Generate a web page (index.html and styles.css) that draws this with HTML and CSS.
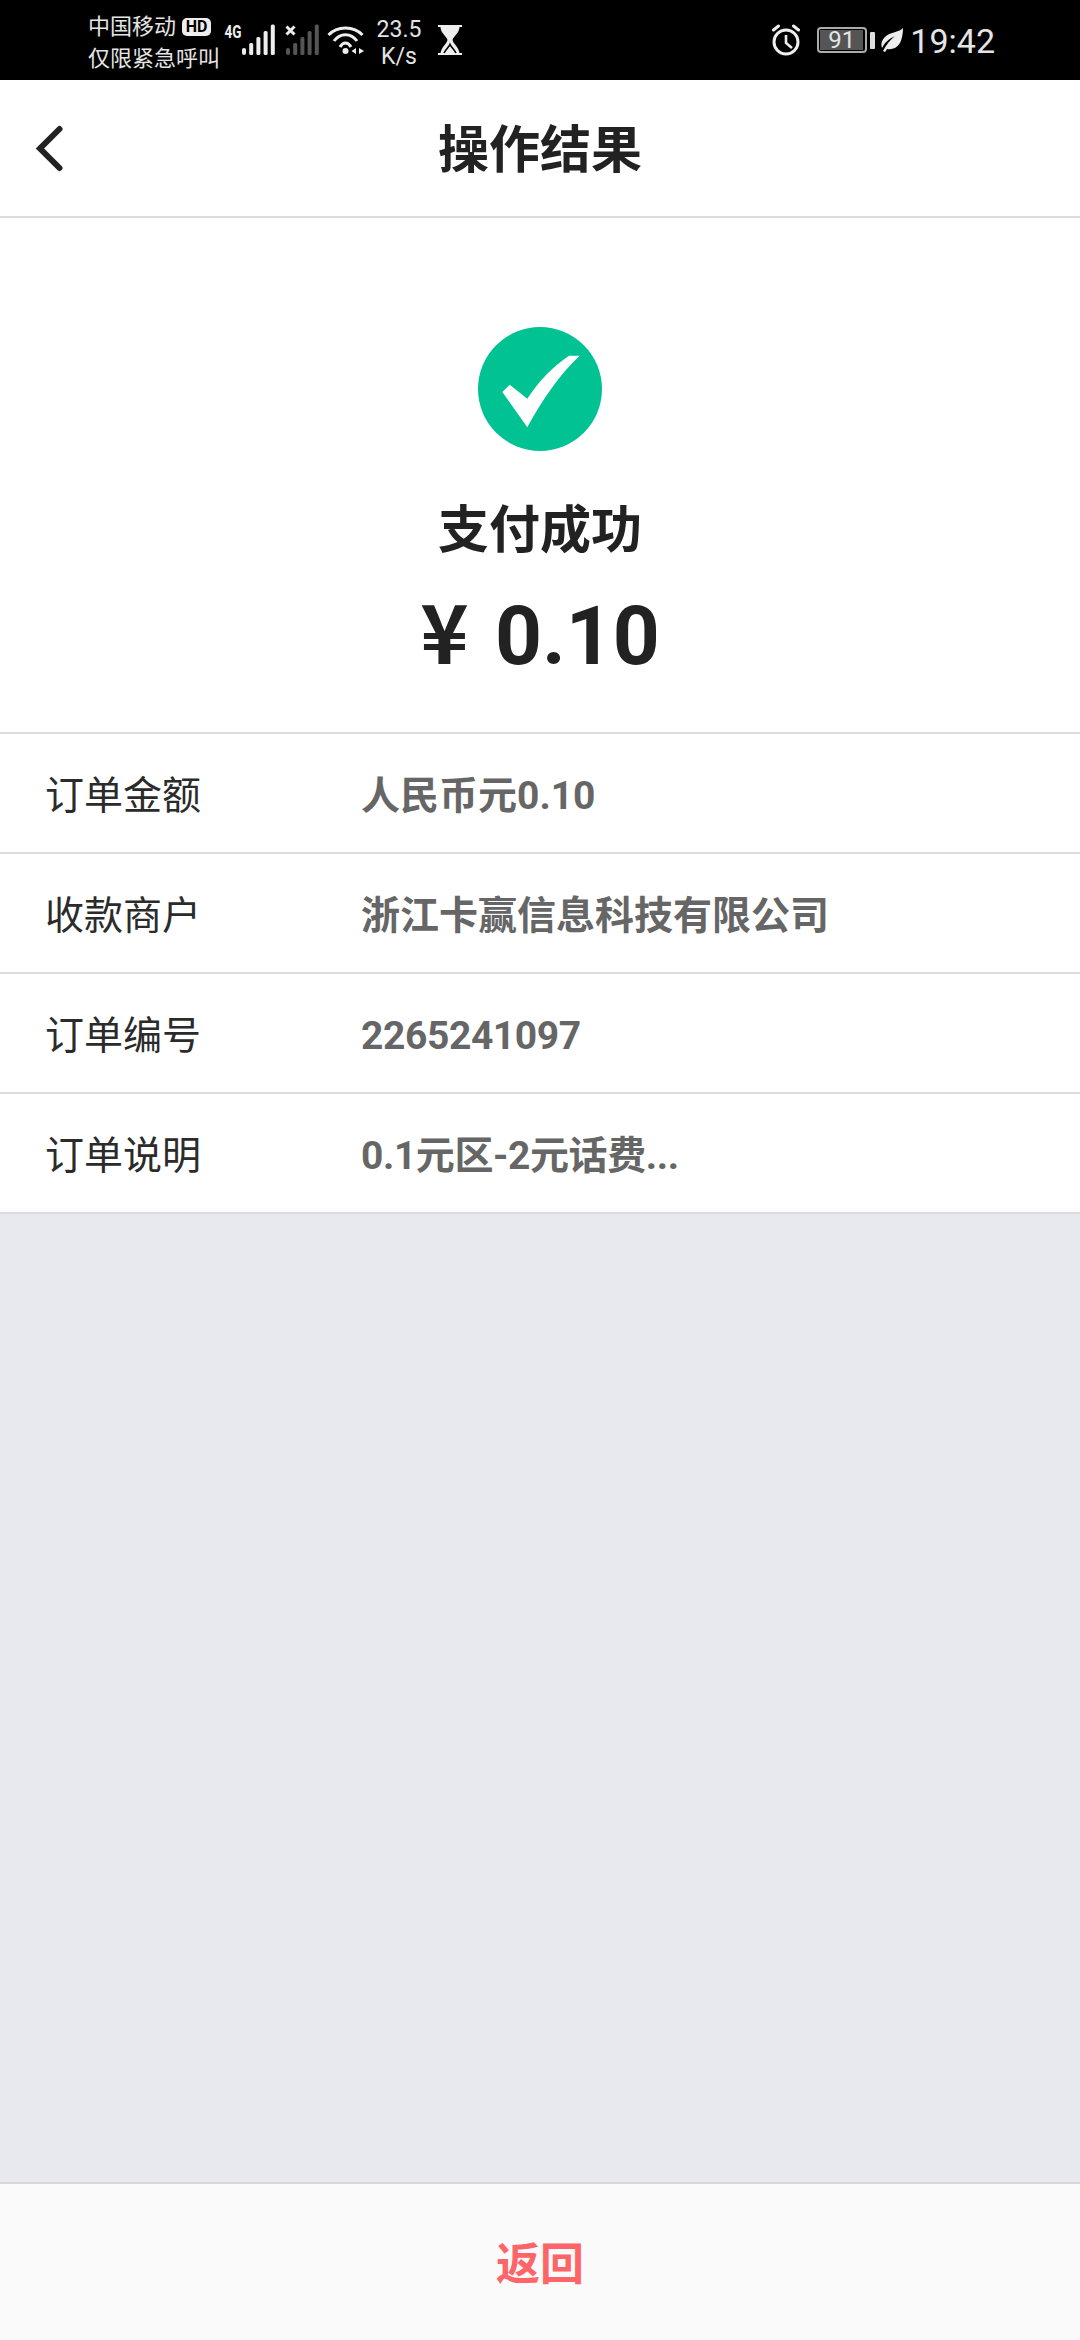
FILE: index.html
```html
<!DOCTYPE html>
<html lang="zh-CN">
<head>
    <meta charset="UTF-8">
    <meta name="viewport" content="width=device-width, initial-scale=1.0">
    <title>操作结果</title>
    <link rel="stylesheet" href="styles.css">
</head>
<body>
<div class="status-bar">
    <div class="status-left">
        <div class="carrier">
            <div class="carrier-line">中国移动<span class="hd">HD</span></div>
            <div class="carrier-line">仅限紧急呼叫</div>
        </div>
        <svg class="signal" width="52" height="40" viewBox="0 0 52 40">
            <text class="net-type" x="0.500" y="17.500" textLength="17" lengthAdjust="spacingAndGlyphs">4G</text>
            <g fill="#eee">
                <rect x="18" y="28" width="4" height="7" rx="2"/>
                <rect x="25.200" y="23" width="4" height="12" rx="1.500"/>
                <rect x="32.400" y="17" width="4" height="18" rx="1.500"/>
                <rect x="39.600" y="11" width="4" height="24" rx="1.500"/>
                <rect x="46.800" y="4.500" width="4" height="30.500" rx="1.500"/>
            </g>
        </svg>
        <svg class="signal-off" width="34" height="40" viewBox="0 0 34 40">
            <path d="M1.500 6.500l8 8M9.500 6.500l-8 8" stroke="#eee" stroke-width="3"/>
            <g fill="#555">
                <rect x="1" y="28" width="4" height="7" rx="2"/>
                <rect x="8.200" y="23" width="4" height="12" rx="1.500"/>
                <rect x="15.400" y="17" width="4" height="18" rx="1.500"/>
                <rect x="22.600" y="11" width="4" height="24" rx="1.500"/>
                <rect x="29.800" y="4.500" width="4" height="30.500" rx="1.500"/>
            </g>
        </svg>
        <svg class="wifi" width="38" height="40" viewBox="0 0 38 40">
            <g fill="none" stroke="#eee" stroke-width="3">
                <path d="M1.500 15C10 5.500 27 5.500 35.500 15"/>
                <path d="M7 21C13 12.500 24 12.500 30 21"/>
                <path d="M13 27C16 21.500 21 21.500 24 27"/>
            </g>
            <circle cx="18.500" cy="31" r="3" fill="#eee"/>
            <path d="M24.500 31l4.500-3v6zM32 28l5 3-5 3z" fill="#eee"/>
        </svg>
        <div class="speed">
            <div>23.5</div>
            <div>K/s</div>
        </div>
        <svg class="hourglass" width="24" height="30" viewBox="0 0 24 30">
            <path d="M0 0h24v2H0zM0 28h24v2H0z" fill="#eee"/>
            <path d="M2.500 2h19c0 6-6 9-7 13 1 4 6 7 7 13h-19c1-6 6-9 7-13-1-4-7-7-7-13z" fill="#eee"/>
            <path d="M6 28C8 24 11 22 12 19.500c1 2.500 4 4.500 6 8.500" fill="none" stroke="#000" stroke-width="1.600"/>
        </svg>
    </div>
    <div class="status-right">
        <svg class="alarm" width="30" height="32" viewBox="0 0 30 32">
            <circle cx="15" cy="18" r="12" fill="none" stroke="#eee" stroke-width="3"/>
            <path d="M15 11v8l6 5" fill="none" stroke="#eee" stroke-width="2.600"/>
            <path d="M2.500 6l5-4M27.500 6l-5-4" stroke="#eee" stroke-width="3" stroke-linecap="round"/>
        </svg>
        <div class="battery">
            <div class="battery-body"><span class="battery-fill">91</span></div>
            <div class="battery-cap"></div>
        </div>
        <svg class="leaf" width="22" height="24" viewBox="0 0 22 24">
            <path d="M22 0C19 4 9 4 4 9c-4 4-4 8-3 11 3-6 7-9 13-12C9 12 5 17 2 23l2 1c1-1 1.500-2 2-3 5 1 10-1 13-6 2-4 3-10 3-15z" fill="#eee"/>
        </svg>
        <div class="clock">19:42</div>
    </div>
</div>

<div class="nav-bar">
    <svg class="back" width="30" height="50" viewBox="0 0 30 50">
        <path d="M24.500 5L5 24.500 24.500 44" fill="none" stroke="#222" stroke-width="6" stroke-linecap="round"/>
    </svg>
    <div class="nav-title">操作结果</div>
</div>

<div class="result">
    <svg class="result-icon" width="124" height="124" viewBox="0 0 124 124">
        <circle cx="62" cy="62" r="62" fill="#00c292"/>
        <path d="M24.300 65l7.400-7.300 17.600 14C62 52 76 39 91 28.700h10.700C82 47 64 73 49.300 100.300z" fill="#fff"/>
    </svg>
    <div class="result-title">支付成功</div>
    <div class="result-amount"><span class="currency">¥</span> 0.10</div>
</div>

<div class="details">
    <div class="detail-row">
        <div class="detail-label">订单金额</div>
        <div class="detail-value">人民币元0.10</div>
    </div>
    <div class="detail-row">
        <div class="detail-label">收款商户</div>
        <div class="detail-value">浙江卡赢信息科技有限公司</div>
    </div>
    <div class="detail-row">
        <div class="detail-label">订单编号</div>
        <div class="detail-value tight">2265241097</div>
    </div>
    <div class="detail-row">
        <div class="detail-label">订单说明</div>
        <div class="detail-value tight">0.1元区-2元话费...</div>
    </div>
</div>

<div class="spacer"></div>

<div class="footer">
    <div class="back-btn">返回</div>
</div>
</body>
</html>
```

FILE: styles.css
```css
* {
    box-sizing: border-box;
}

body {
    display: flex;
    flex-direction: column;
    height: 2340px;
    margin: 0;
    background-color: #e8e9ee;
    font-family: Roboto, "Noto Sans CJK SC", sans-serif;
    color: #222;
    overflow: hidden;
}

/* Status bar */
.status-bar {
    display: flex;
    justify-content: space-between;
    align-items: center;
    height: 80px;
    padding: 0 85px 0 88px;
    background-color: #000;
    color: #e4e4e4;
}

.status-left, .status-right {
    display: flex;
    align-items: center;
}

.carrier {
    width: 136px;
    padding-top: 5px;
    font-size: 22px;
    line-height: 32px;
}

.carrier-line {
    display: flex;
    align-items: center;
    white-space: nowrap;
}

.hd {
    width: 29px;
    height: 18px;
    margin-left: 6px;
    border-radius: 5px;
    background-color: #eee;
    color: #000;
    font-size: 16px;
    line-height: 18px;
    font-weight: 700;
    text-align: center;
}

.net-type {
    font-family: "Roboto", sans-serif;
    font-size: 18px;
    font-weight: 700;
    fill: #eee;
}

.signal-off {
    margin-left: 9px;
}

.wifi {
    margin-left: 8px;
}

.speed {
    width: 60px;
    margin-left: 4px;
    padding-top: 5px;
    font-size: 23px;
    line-height: 27px;
    text-align: center;
}

.hourglass {
    margin-left: 9px;
}

.alarm {
    margin-right: 16px;
}

.battery {
    display: flex;
    align-items: center;
    margin-right: 6px;
}

.battery-body {
    width: 50px;
    height: 26px;
    padding: 1px;
    border: 2px solid #aaa;
    border-radius: 4px;
}

.battery-fill {
    display: block;
    width: 43px;
    height: 100%;
    background-color: #555;
    font-size: 24px;
    line-height: 20px;
    text-align: center;
}

.battery-cap {
    width: 5px;
    height: 17px;
    margin-left: 3px;
    border-radius: 1px;
    background-color: #ddd;
}

.leaf {
    margin-right: 7px;
}

.clock {
    padding-top: 2px;
    font-size: 34px;
    line-height: 40px;
}

/* Nav */
.nav-bar {
    position: relative;
    display: flex;
    justify-content: center;
    align-items: center;
    height: 138px;
    padding-top: 6px;
    background-color: #fff;
    border-bottom: 2px solid #dcdce0;
}

.back {
    position: absolute;
    left: 35px;
    top: 44px;
}

.nav-title {
    font-size: 51px;
    line-height: 60px;
    font-weight: 700;
}

/* Result */
.result {
    display: flex;
    flex-direction: column;
    align-items: center;
    height: 514px;
    padding-top: 109px;
    background-color: #fff;
}

.result-title {
    margin-top: 44px;
    font-size: 51px;
    line-height: 72px;
    font-weight: 700;
}

.result-amount {
    margin-top: 14px;
    font-size: 82px;
    line-height: 96px;
    font-weight: 700;
}

.currency {
    margin-right: 6px;
    font-family: "Noto Sans CJK SC", sans-serif;
}

/* Detail rows */
.details {
    background-color: #fff;
    border-top: 2px solid #dcdce0;
}

.detail-row {
    display: flex;
    align-items: center;
    height: 120px;
    padding: 5px 0 0 45px;
    border-bottom: 2px solid #dcdce0;
    font-size: 39px;
    line-height: 50px;
}

.detail-label {
    width: 316px;
    color: #2b2b2b;
}

.detail-value {
    color: #666;
    font-weight: 700;
}

.tight {
    letter-spacing: -0.4px;
}

.spacer {
    flex: 1;
}

/* Footer */
.footer {
    display: flex;
    justify-content: center;
    align-items: center;
    height: 158px;
    padding-top: 5px;
    background-color: #fafafa;
    border-top: 2px solid #d6d6db;
}

.back-btn {
    font-size: 44px;
    line-height: 50px;
    font-weight: 700;
    color: #fe6568;
}
```
